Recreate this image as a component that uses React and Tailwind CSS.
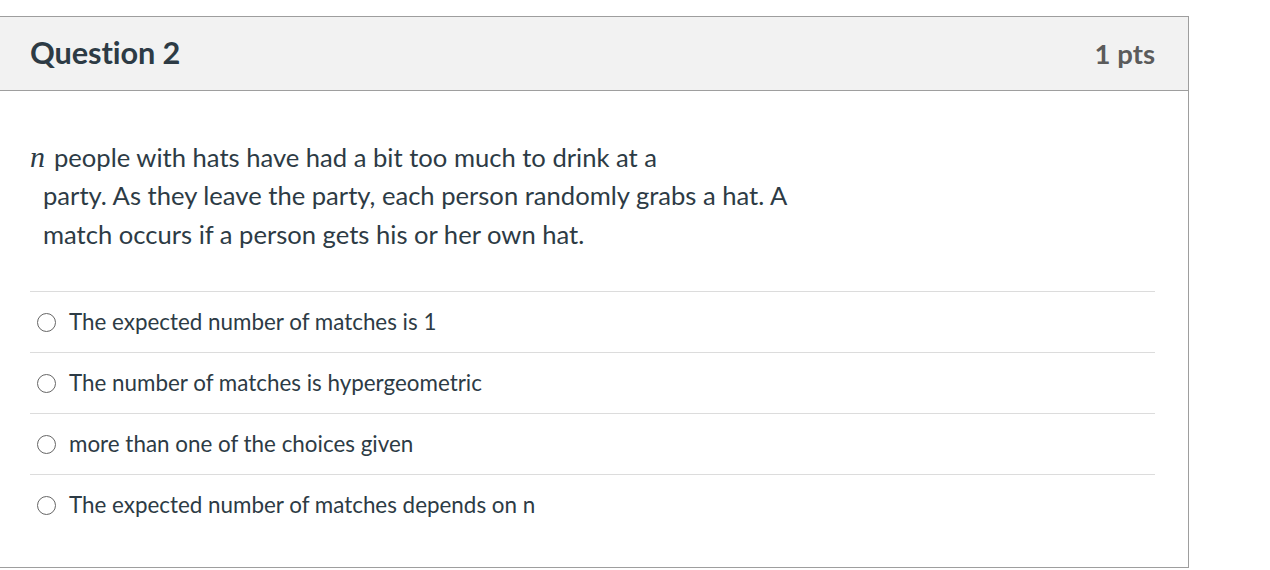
export default function App() {
  const answers = [
    'The expected number of matches is 1',
    'The number of matches is hypergeometric',
    'more than one of the choices given',
    'The expected number of matches depends on n',
  ];

  return (
    <div className="min-h-screen bg-white pt-4" style={{ fontFamily: 'Lato, "Liberation Sans", sans-serif' }}>
      <div className="w-[1189px] border-y border-r border-[#9e9e9e] h-[552px]">
        <div className="flex items-center justify-between h-[74px] bg-[#f2f2f2] border-b border-[#9e9e9e] pl-[30px] pr-[33px]">
          <h2 className="text-[30.7px] font-bold text-[#2d3b45] tracking-[-0.1px]">Question 2</h2>
          <span className="text-[27.5px] font-bold text-[#5b5b5b]">1 pts</span>
        </div>

        <div className="pl-[30px] pr-[33px] pt-[47px]">
          <div className="text-[25.6px] leading-[38.4px] text-[#2d3b45]">
            <div>
              <span className="italic text-[30px] mr-[9px]" style={{ fontFamily: '"Liberation Serif", serif' }}>n</span>
              people with hats have had a bit too much to drink at a
            </div>
            <div className="pl-[13px]">party. As they leave the party, each person randomly grabs a hat. A</div>
            <div className="pl-[13px]">match occurs if a person gets his or her own hat.</div>
          </div>

          <div className="mt-[38px]">
            {answers.map((a) => (
              <label key={a} className="flex items-center h-[61px] border-t border-[#dcdcdc] pl-[7px] cursor-pointer">
                <span className="w-[19px] h-[19px] rounded-full border-[1.5px] border-[#666666] bg-white shrink-0" />
                <span className="ml-[13px] text-[22.4px] text-[#2d3b45]">{a}</span>
              </label>
            ))}
          </div>
        </div>
      </div>
    </div>
  );
}
